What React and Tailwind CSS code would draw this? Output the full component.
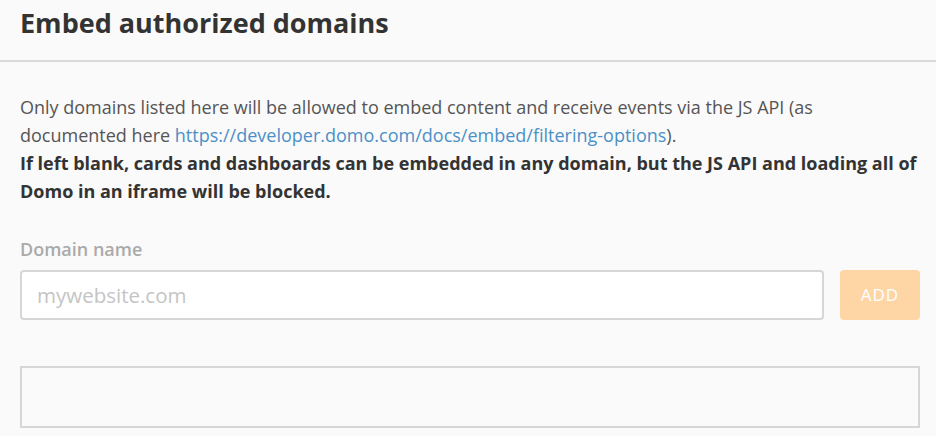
import React from "react";

export default function App() {
  return (
    <div className="w-[936px] h-[436px] overflow-hidden bg-[#fafafa] text-[#555] font-['Open_Sans',sans-serif]">
      <div className="h-[62px] border-b-2 border-[#d9d9d9] px-5 pt-[3px]">
        <h1 className="text-[27px] font-bold text-[#333] leading-[40px]">Embed authorized domains</h1>
      </div>
      <div className="pl-5 pr-4 pt-[31px]">
        <p className="text-[18px] leading-[28px]">
          Only domains listed here will be allowed to embed content and receive events via the JS API (as documented here{" "}
          <a className="text-[#4b90c6]" href="#">https://developer.domo.com/docs/embed/filtering-options</a>).
        </p>
        <p className="text-[18px] leading-[28px] font-bold text-[#333]">
          If left blank, cards and dashboards can be embedded in any domain, but the JS API and loading all of Domo in an iframe will be blocked.
        </p>
        <label className="block mt-[32px] text-[18px] leading-[24px] font-semibold text-[#aaa]">Domain name</label>
        <div className="flex gap-4 mt-[9px]">
          <input
            className="flex-1 h-[50px] rounded border-2 border-[#d6d6d6] bg-white px-[15px] text-[20.5px] text-[#333] placeholder:text-[#c4c4c4] outline-none"
            placeholder="mywebsite.com"
          />
          <button className="w-[80px] h-[50px] rounded bg-[#fed6a6] text-white text-[17px] tracking-[1px] font-normal">ADD</button>
        </div>
        <div className="mt-[46px] h-[62px] border-2 border-[#d6d6d6]"></div>
      </div>
    </div>
  );
}
